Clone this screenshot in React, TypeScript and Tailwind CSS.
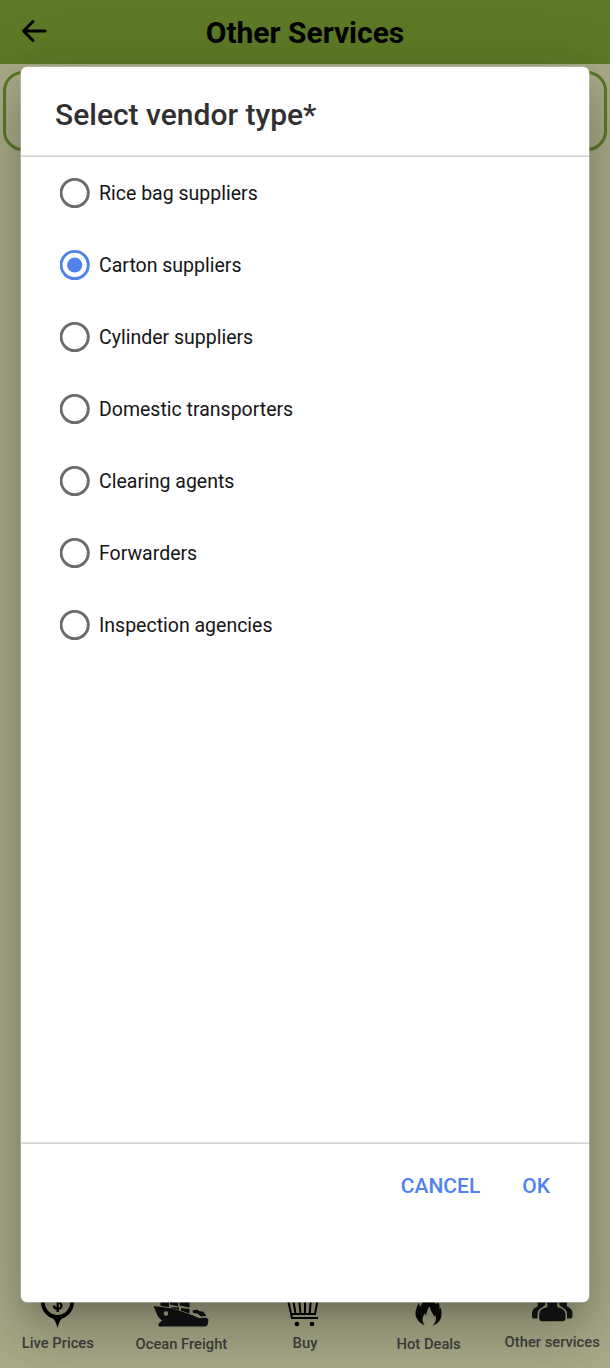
import React, { useState } from "react";

const vendors = [
  "Rice bag suppliers",
  "Carton suppliers",
  "Cylinder suppliers",
  "Domestic transporters",
  "Clearing agents",
  "Forwarders",
  "Inspection agencies",
];

function PricePin() {
  return (
    <svg className="h-[48px] w-[60px]" viewBox="0 0 60 48">
      <path fillRule="evenodd" fill="#000" d="M29.500 1.500A16.500 16.500 0 0 0 13 18C13 27 19.500 33 25 34.500C27 36 28.500 40 29.500 44C30.500 40 32 36 34 34.500C39.500 33 46 27 46 18A16.500 16.500 0 0 0 29.500 1.500ZM29.500 5.500A12.700 12.700 0 1 1 29.500 30.900A12.700 12.700 0 0 1 29.500 5.500Z" />
      <path fill="none" stroke="#000" strokeWidth="2.200" d="M33 13.500C32.500 9 26 9.500 26 13.500C26 18 33.500 17 33.500 21.700C33.500 26 26.500 26 25.700 21.500M29.700 8V28" />
    </svg>
  );
}

function Ship() {
  return (
    <svg className="h-[48px] w-[60px]" viewBox="0 0 60 48" fill="#141414">
      <path fillRule="evenodd" d="M2.500 22L22 24.500L41 31L48 34L55.500 33.700L57.500 35.500L56.700 40.500Q56 42.500 54 42.500H8Q7 41 7.500 39.700L11 36.500Q7 34 5 28ZM15 27.200A2.300 2.300 0 1 0 15 31.800A2.300 2.300 0 1 0 15 27.200Z" />
      <path d="M9.500 18H18V23L9.500 22ZM19 13H27V22.500L19 20.500ZM28.500 13H38.500V23.500L28.500 21.500ZM20 23L28 23.500V26L21 24ZM30 24L38.500 25V29.500L30 26.500ZM41.500 26.500L46 25.500L48.500 27.200L52 27.500L55.500 32L50 32.500L46.500 29.500L42 29Z" />
    </svg>
  );
}

function Cart() {
  return (
    <svg className="h-[48px] w-[60px]" viewBox="0 0 60 48">
      <g fill="none" stroke="#000" strokeWidth="2">
        <path d="M7.500 9H11.500L17 34H43" />
        <path d="M12.300 14.500H43L40 30H16.500" />
        <path d="M18 14.500L20.500 29.500M24 14.500L25.500 29.500M30 14.500V29.500M36 14.500L34.700 29.500" />
      </g>
      <circle cx="22" cy="40" r="2.300" />
      <circle cx="37" cy="40" r="2.300" />
    </svg>
  );
}

function Flame() {
  return (
    <svg className="h-[48px] w-[60px]" viewBox="0 0 60 48">
      <path fill="#0b0b0c" d="M26 41.500C18 38 14.800 32 17.200 25C17.800 23 19 20.500 19.700 18.800L21.200 23C24 18 26 12 29.500 7C31 13 35 16 37 20.300L39 18L40.500 21.500L40.700 25.500L41.700 23.500C44.200 32 41.300 39.500 33.500 41.500C37.300 38 37.500 34.500 36.200 31L35 33C34 28.500 31.200 27.500 31 22.300C28 25 27.500 28.500 27.200 31.500L25.500 29.500C23 34 23 38 26 41.500Z" />
    </svg>
  );
}

function People() {
  return (
    <svg className="h-[48px] w-[60px]" viewBox="0 0 60 48" fill="#171717">
      <circle cx="19.500" cy="17" r="4.500" />
      <circle cx="41" cy="17" r="4.500" />
      <path d="M16 19H22L23.300 20.500Q23 22 20 23.500Q15.500 25.500 15.500 30V34.500H11.500Q10 34.500 10 32.500V29Q10 24.500 15.500 22.500Z" />
      <path d="M44.500 19H38.500L37.200 20.500Q37.500 22 40.500 23.500Q45 25.500 45 30V34.500H48.500Q50.500 34.500 50.500 32.500V29Q50.500 24.500 45 22.500Z" />
      <path d="M25 12Q30.300 5 35.500 12V19Q34.500 21.500 35.500 23Q43.500 25 43.500 30V34Q43.500 37.300 40.500 37.300H20Q17.200 37.300 17.200 34V30Q17.200 25 25.200 23Q26 21.500 25 19Z" />
    </svg>
  );
}

const tabs = [
  { name: "Live Prices", icon: <PricePin />, label: "pt-[2px]" },
  { name: "Ocean Freight", icon: <Ship />, label: "pt-[3px]" },
  { name: "Buy", icon: <Cart />, label: "pt-[2px]" },
  { name: "Hot Deals", icon: <Flame />, label: "pt-[3px]" },
  { name: "Other services", icon: <People />, label: "pt-[1px]" },
];

export default function App() {
  const [selected, setSelected] = useState("Carton suppliers");
  return (
    <div className="relative flex h-[1368px] w-[610px] flex-col overflow-hidden bg-[#abac8a] font-['Roboto',sans-serif]">
      <header className="grid h-16 grid-cols-[68px_1fr_68px] items-center bg-[#5c7a27]">
        <button aria-label="Back" className="flex pl-[20px]">
          <svg className="h-7 w-7" viewBox="0 0 28 28" fill="none" stroke="#000" strokeWidth="3" strokeLinecap="round" strokeLinejoin="round">
            <path d="M13 3.500L3.500 13L13 22.500M4 13H25" />
          </svg>
        </button>
        <h1 className="pt-[1px] text-center text-[30px] font-bold leading-[40px] text-black">Other Services</h1>
      </header>
      <main className="flex-1 px-[3px] pt-[7px]">
        <div className="h-[80px] rounded-[20px] border-[3px] border-[#5c7a27]" />
      </main>
      <nav className="-mx-1 grid h-[84px] grid-cols-5">
        {tabs.map((t) => (
          <div key={t.name} className="flex flex-col items-center">
            {t.icon}
            <span className={`${t.label} whitespace-nowrap text-[14.750px] font-medium leading-[18px] text-[#404040]`}>{t.name}</span>
          </div>
        ))}
      </nav>

      <div className="absolute inset-0 flex items-start justify-center pt-[67px]">
        <section role="dialog" aria-label="Select vendor type" className="flex h-[1235px] w-[568px] flex-col rounded-[6px] bg-white shadow-[0_0_0_0.500px_#c9cabf,0_16px_22px_-10px_rgba(0,0,0,0.2),0_36px_57px_4px_rgba(0,0,0,0.14),0_13px_68px_12px_rgba(0,0,0,0.12)]">
          <h2 className="h-[88px] pl-[34px] pt-[28px] text-[30px] font-medium leading-[40px] text-[#303030]">Select vendor type*</h2>
          <div className="h-[2px] bg-linear-to-b from-[#e9e9e9] to-[#c9c9c9]" />
          <div className="flex h-[985px] flex-col">
            {vendors.map((v) => (
              <button key={v} role="radio" aria-checked={selected === v} onClick={() => setSelected(v)} className="flex h-[72px] items-center gap-[9px] pl-[39px] text-left">
                <svg className={`h-[32px] w-[30px] ${selected === v ? "text-[#5082ee]" : "text-[#6b6b6b]"}`} viewBox="0 0 30 32">
                  <circle cx="14.700" cy="16" r="13.600" fill="none" stroke="currentColor" strokeWidth="2.900" />
                  {selected === v && <circle cx="14.700" cy="16" r="7.600" fill="currentColor" />}
                </svg>
                <span className="pt-[1px] text-[19.500px] leading-[26px] text-[#151515]">{v}</span>
              </button>
            ))}
          </div>
          <div className="h-[2px] bg-linear-to-b from-[#e9e9e9] to-[#c9c9c9]" />
          <footer className="flex justify-end gap-[42px] pr-[39px] pt-[28px] text-[21px] font-medium leading-[28px] text-[#5082ee]">
            <button>CANCEL</button>
            <button>OK</button>
          </footer>
        </section>
      </div>
    </div>
  );
}
